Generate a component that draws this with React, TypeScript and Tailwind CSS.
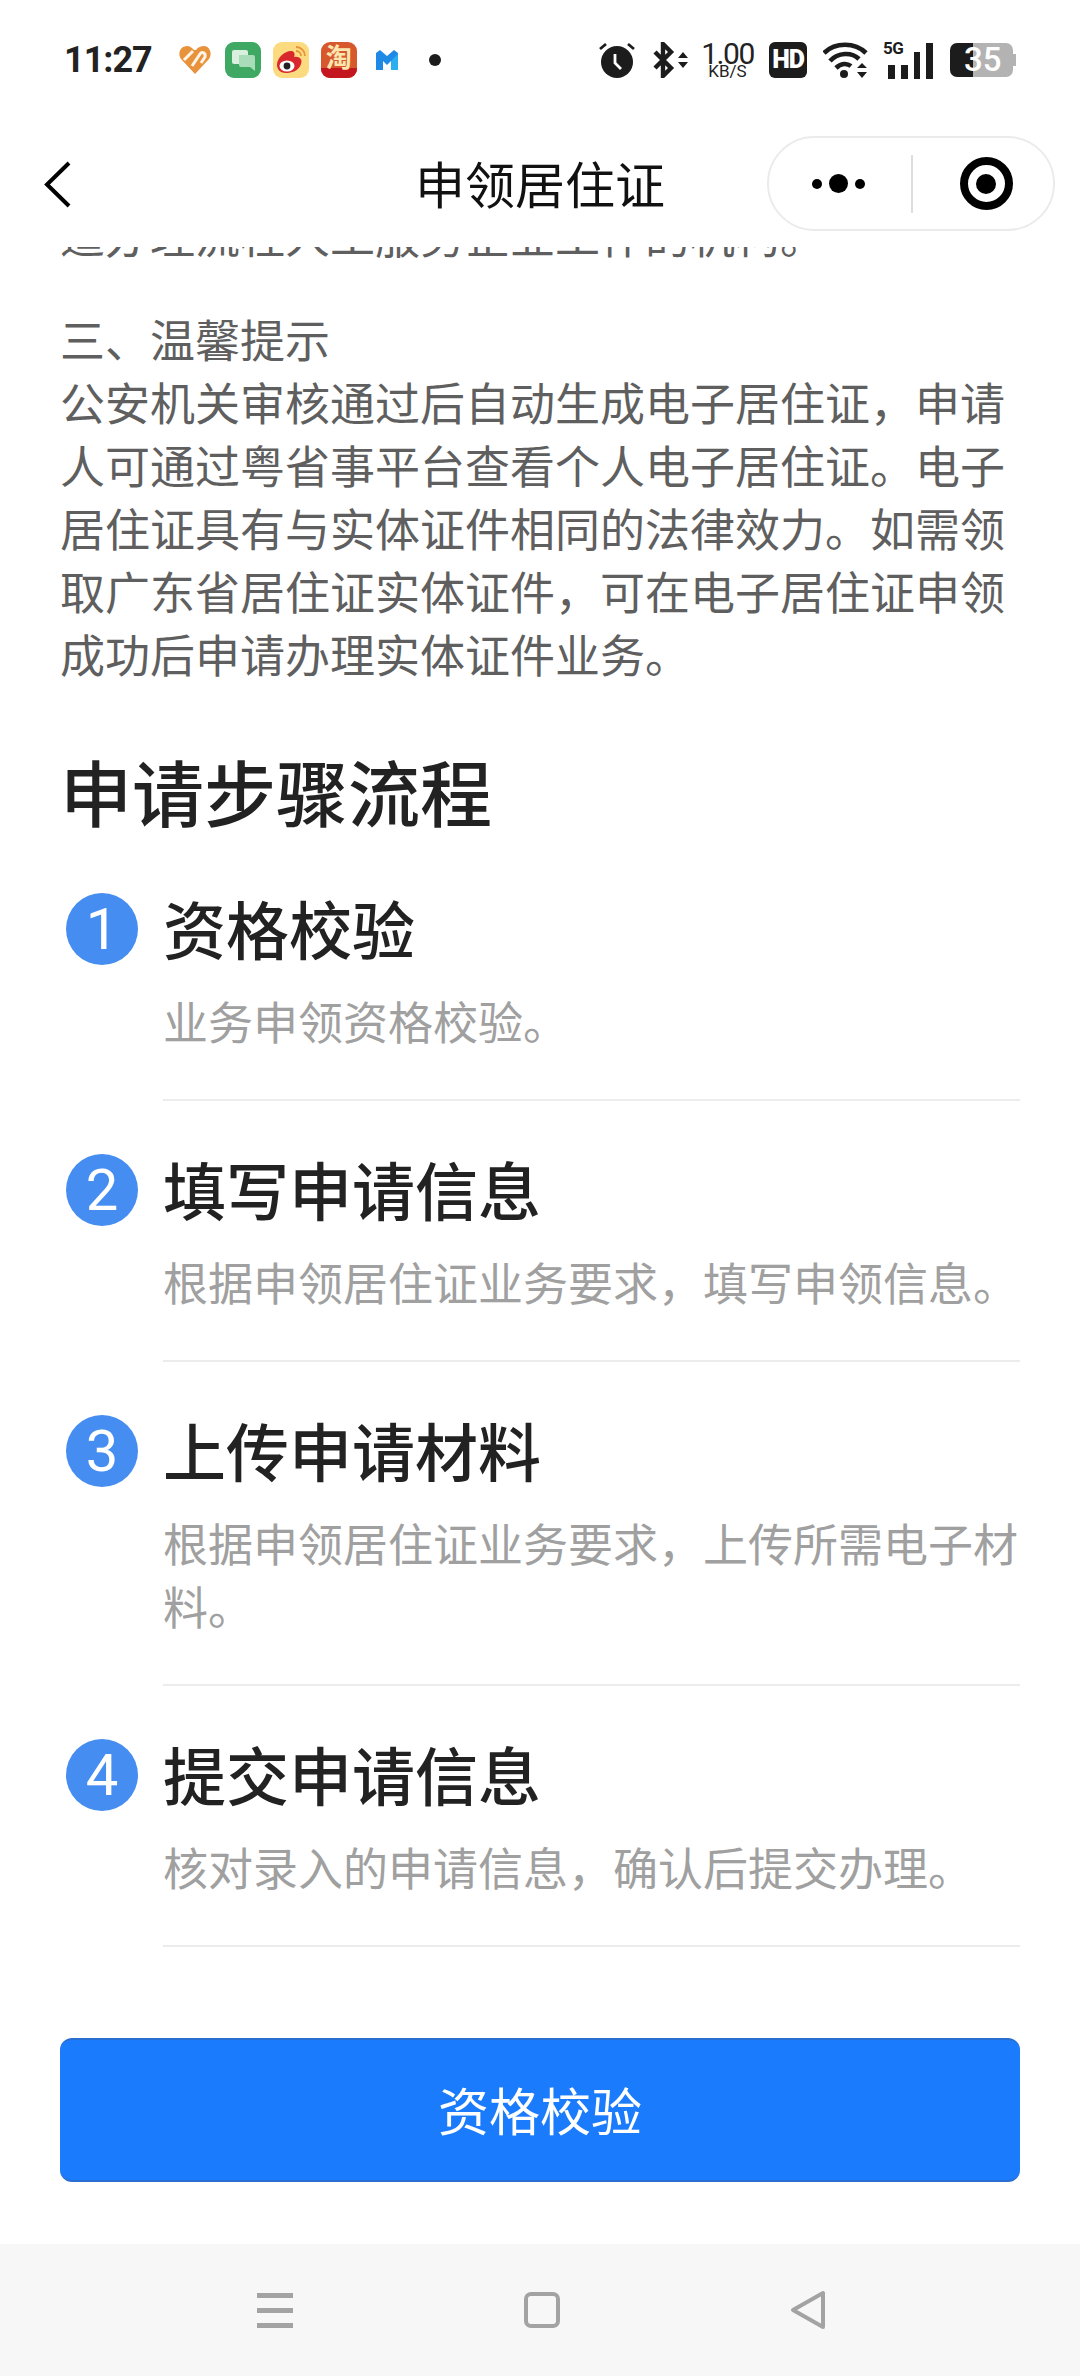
import React from 'react';

const font = "font-['Noto_Sans_CJK_SC','Noto_Sans',sans-serif]";

const steps = [
  { n: '1', title: '资格校验', desc: '业务申领资格校验。' },
  { n: '2', title: '填写申请信息', desc: '根据申领居住证业务要求，填写申领信息。' },
  { n: '3', title: '上传申请材料', desc: '根据申领居住证业务要求，上传所需电子材料。' },
  { n: '4', title: '提交申请信息', desc: '核对录入的申请信息，确认后提交办理。' },
];

const AppIcons: React.FC = () => (
  <div className="ml-[27px] flex items-center">
    <svg width="32" height="28" viewBox="0 0 32 28">
      <path d="M16 28 L2 13 C-2 7 2 0 8 0 C11 0 13 2 15 4 L17 4 C19 1 22 0 25 0 C30 0 34 7 30 13 Z" fill="#e8923c" />
      <path d="M5 14 L14 5 M13 20 L21 8 C23 5 27 7 26 11 L22 17" stroke="#fff4e6" strokeWidth="3" fill="none" />
    </svg>
    <svg width="36" height="36" viewBox="0 0 36 36" className="ml-[14px]">
      <rect width="36" height="36" rx="9" fill="#3fa862" />
      <rect x="7" y="8" width="16" height="14" rx="2" fill="#d9f0df" />
      <path d="M14 13 H28 a2 2 0 0 1 2 2 V29 L25 25 H16 a2 2 0 0 1 -2 -2 Z" fill="#a9dcb8" />
    </svg>
    <svg width="36" height="36" viewBox="0 0 36 36" className="ml-[12px]">
      <rect width="36" height="36" rx="9" fill="#fbda80" />
      <path d="M4 23 C4 15 13 8 19 9 C22 10 22 13 21 15 C26 14 30 17 28 22 C26 29 18 31 13 31 C8 31 4 28 4 23 Z" fill="#d9272e" />
      <ellipse cx="14" cy="24" rx="7.5" ry="5.5" fill="#fff" />
      <circle cx="14" cy="24" r="3.4" fill="#222" />
      <path d="M23 5 a9 9 0 0 1 9 9 M23 9 a5 5 0 0 1 5 5" stroke="#e8923c" strokeWidth="1.8" fill="none" />
    </svg>
    <div className="ml-[12px] relative w-[36px] h-[36px] rounded-[9px] overflow-hidden bg-[#d8582e] flex justify-center">
      <div className="absolute left-0 right-0 bottom-0 h-[10px] bg-[#c4161f]" />
      <span className="relative text-[26px] leading-[28px] font-bold text-[#fbe6b0]">淘</span>
    </div>
    <svg width="22" height="20" viewBox="0 0 22 20" className="ml-[19px]">
      <path d="M0 3 L4 0 L11 6 L18 0 L22 3 V20 H15 V11 L11 15 L7 11 V20 H0 Z" fill="#1e8ae6" />
      <path d="M15 11 L22 4 V20 H15 Z" fill="#29aef0" />
    </svg>
    <span className="ml-[31px] w-[12px] h-[12px] rounded-full bg-[#1c1c1c]" />
  </div>
);

const StatusBar: React.FC = () => (
  <div className="h-[120px] flex items-center justify-between pl-[64px] pr-[64px] bg-white">
    <div className="flex items-center">
      <span className="text-[36px] leading-[40px] font-bold tracking-[-1px] font-['Roboto',sans-serif] text-[#222]">11:27</span>
      <AppIcons />
    </div>
    <div className="flex items-center">
      <svg width="36" height="36" viewBox="0 0 36 36">
        <circle cx="18" cy="20" r="16" fill="#1c1c1c" />
        <path d="M16 12 V21 L22 27" stroke="#fff" strokeWidth="2.8" fill="none" />
        <path d="M1 7 L7 2 M35 7 L29 2" stroke="#1c1c1c" strokeWidth="2.8" />
      </svg>
      <svg width="36" height="36" viewBox="0 0 36 36" className="ml-[18px]">
        <path d="M2 10 L18 26 L10 34 V2 L18 10 L2 26" stroke="#1c1c1c" strokeWidth="4.4" fill="none" />
        <path d="M25 16 L30 10 L35 16 Z M25 20 L30 26 L35 20 Z" fill="#1c1c1c" />
      </svg>
      <div className="ml-[13px] w-[51px] flex flex-col items-center text-[#222] font-['Roboto',sans-serif]">
        <span className="text-[30px] leading-[23px] tracking-[-1.5px]">1.00</span>
        <span className="text-[17px] leading-[13px]">KB/S</span>
      </div>
      <div className="ml-[16px] w-[38px] h-[36px] rounded-[6px] bg-[#1c1c1c] flex items-center justify-center text-white text-[25px] font-black tracking-[-1px] font-['Roboto',sans-serif]">HD</div>
      <svg width="45" height="37" viewBox="0 0 45 37" className="ml-[16px]">
        <path d="M1 11 C12 0 32 0 43 11 M7 19 C15 10 29 10 36 17 M13 26 C18 21 24 21 28 24" stroke="#1c1c1c" strokeWidth="4.6" fill="none" />
        <circle cx="21" cy="32" r="4" fill="#1c1c1c" />
        <path d="M34 26 L39 21 L44 26 Z M34 30 L39 36 L44 30 Z" fill="#1c1c1c" />
      </svg>
      <div className="ml-[15px] relative w-[50px] h-[37px] flex items-end gap-[6px]">
        <span className="absolute left-0 top-[-3px] text-[17px] leading-[18px] font-bold tracking-[-0.5px] font-['Roboto',sans-serif] text-[#1c1c1c]">5G</span>
        <span className="ml-[5px] w-[7px] h-[14px] bg-[#1c1c1c]" />
        <span className="w-[7px] h-[14px] bg-[#1c1c1c]" />
        <span className="w-[7px] h-[27px] bg-[#1c1c1c]" />
        <span className="w-[7px] h-[36px] bg-[#1c1c1c]" />
      </div>
      <div className="ml-[17px] relative w-[66px] h-[34px] flex">
        <div className="w-[23px] h-full bg-[#1c1c1c] rounded-l-[7px]" />
        <div className="w-[40px] h-full bg-[#b3b3b3] rounded-r-[7px]" />
        <div className="w-[3px] h-[12px] self-center bg-[#b3b3b3]" />
        <span className="absolute left-[14px] top-0 leading-[34px] text-[33px] font-medium text-white font-['Roboto',sans-serif]">35</span>
      </div>
    </div>
  </div>
);

const NavHeader: React.FC = () => (
  <div className="relative z-10 h-[127px] bg-white flex items-center justify-center">
    <svg width="27" height="47" viewBox="0 0 27 47" className="absolute left-[44px] top-[41px]">
      <path d="M25 2 L3 23.5 L25 45" stroke="#000" strokeWidth="4" fill="none" />
    </svg>
    <span className="text-[50px] leading-[64px] text-[#111] pb-[3px]">申领居住证</span>
    <div className="absolute left-[767px] top-[16px] w-[288px] h-[95px] rounded-full border-2 border-[#ebebeb] flex items-center bg-white">
      <div className="w-[142px] flex items-center justify-center gap-[7px] pr-[4px]">
        <span className="w-[10px] h-[10px] rounded-full bg-black" />
        <span className="w-[19px] h-[19px] rounded-full bg-black" />
        <span className="w-[10px] h-[10px] rounded-full bg-black" />
      </div>
      <div className="w-[2px] h-[58px] bg-[#dddddd]" />
      <div className="flex-1 flex items-center justify-center pl-[6px]">
        <div className="w-[53px] h-[53px] rounded-full border-[8px] border-black flex items-center justify-center">
          <span className="w-[20px] h-[20px] rounded-full bg-black" />
        </div>
      </div>
    </div>
  </div>
);

const App: React.FC = () => {
  return (
    <div className={`w-[1080px] h-[2376px] bg-white overflow-hidden flex flex-col ${font}`}>
      <StatusBar />
      <NavHeader />

      <div className="flex-1 overflow-hidden px-[60px]">
        <div className="-mt-[44px] text-[45px] leading-[63px] text-[#5f5f5f]">
          <p className="whitespace-nowrap">适办理流程人工服务企业工作的机构。</p>
          <p className="mt-[41px]">三、温馨提示</p>
          <p>
            公安机关审核通过后自动生成电子居住证，申请人可通过粤省事平台查看个人电子居住证。电子居住证具有与实体证件相同的法律效力。如需领取广东省居住证实体证件，可在电子居住证申领成功后申请办理实体证件业务。
          </p>
        </div>

        <h2 className="mt-[57px] text-[72px] leading-[96px] font-medium text-[#222]">申请步骤流程</h2>

        <div className="mt-[47px]">
          {steps.map(step => (
            <div key={step.n} className="flex mb-[45px]">
              <div className="w-[103px] pt-[8px] pl-[6px]">
                <div className="w-[72px] h-[72px] rounded-full bg-[#458df0] text-white flex items-center justify-center text-[58px] leading-none font-['Roboto',sans-serif]">
                  {step.n}
                </div>
              </div>
              <div className="flex-1 pb-[47px] border-b-2 border-[#ececec]">
                <h3 className="text-[63px] leading-[84px] text-[#222] font-medium">{step.title}</h3>
                <p className="mt-[20px] text-[45px] leading-[63px] text-[#a0a0a0]">{step.desc}</p>
              </div>
            </div>
          ))}
        </div>

        <button className="mt-[46px] w-full h-[144px] rounded-[12px] bg-[#1b7bfd] border-y-2 border-[#2a6fd0] text-white text-[51px] pb-[2px]">
          资格校验
        </button>
      </div>

      <div className="h-[132px] bg-[#f7f7f7] flex items-center justify-between pl-[257px] pr-[254px]">
        <div className="flex flex-col justify-between w-[36px] h-[35px]">
          <span className="h-[5px] bg-[#a3a3a3]" />
          <span className="h-[5px] bg-[#a3a3a3]" />
          <span className="h-[5px] bg-[#a3a3a3]" />
        </div>
        <div className="w-[36px] h-[36px] rounded-[7px] border-[4px] border-[#a3a3a3]" />
        <svg width="36" height="40" viewBox="0 0 36 40">
          <path d="M33 3 V37 L3 20 Z" stroke="#a3a3a3" strokeWidth="4" strokeLinejoin="round" fill="none" />
        </svg>
      </div>
    </div>
  );
};

export default App;
